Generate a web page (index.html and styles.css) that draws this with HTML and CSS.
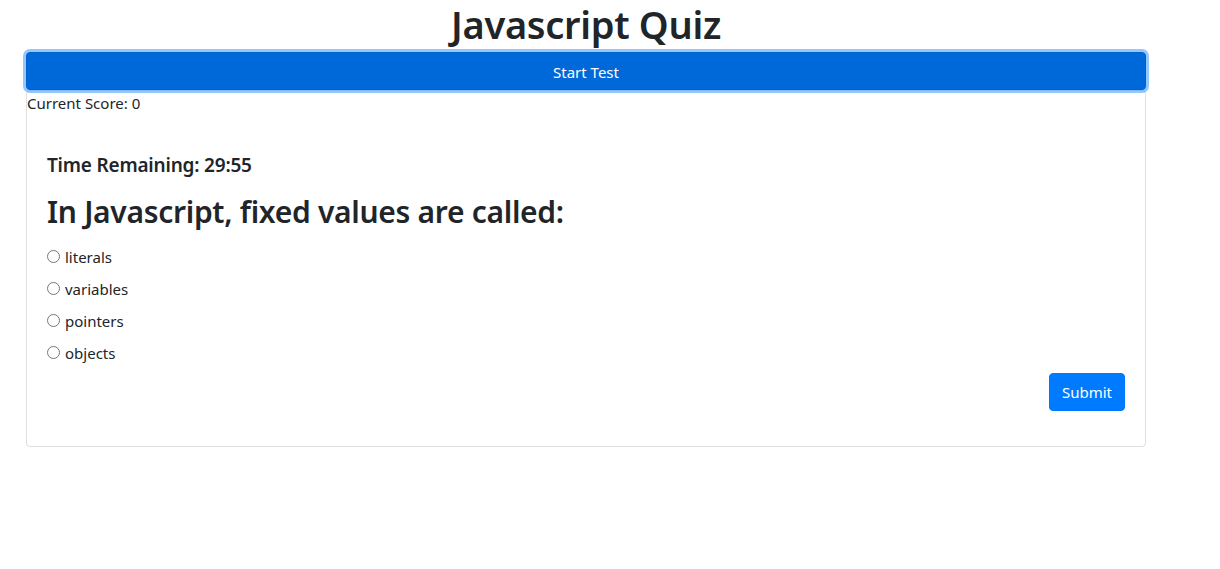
FILE: index.html
```html
<!DOCTYPE html>
<html lang="en">
<head>
<meta charset="utf-8">
<title>Javascript Quiz</title>
<link rel="stylesheet" href="styles.css">
</head>
<body>
<div class="page">
  <h1 class="title">Javascript Quiz</h1>
  <button class="btn-start" type="button">Start Test</button>
  <div class="card">
    <div class="score">Current Score: 0</div>
    <div class="card-body">
      <h5 class="timer">Time Remaining: 29:55</h5>
      <h2 class="question">In Javascript, fixed values are called:</h2>
      <form class="answers">
        <label class="option"><input type="radio" name="a" class="radio"> literals</label>
        <label class="option"><input type="radio" name="a" class="radio"> variables</label>
        <label class="option"><input type="radio" name="a" class="radio"> pointers</label>
        <label class="option"><input type="radio" name="a" class="radio"> objects</label>
        <div class="actions"><button class="btn-submit" type="button">Submit</button></div>
      </form>
    </div>
  </div>
</div>
</body>
</html>
```
FILE: styles.css
```css
* { box-sizing: border-box; }
html, body { margin: 0; padding: 0; background: #fff; }
body {
  font-family: "Noto Sans", "Open Sans", sans-serif;
  font-size: 15px;
  line-height: 1.5;
  color: #212529;
}
.page {
  width: 1120px;
  margin-left: 26px;
  display: flex;
  flex-direction: column;
}
.title {
  margin: 0 0 4px;
  font-size: 38px;
  font-weight: 600;
  line-height: 48px;
  text-align: center;
  letter-spacing: -0.3px;
}
.btn-start {
  height: 38px;
  width: 100%;
  padding-top: 2px;
  border: 1px solid #0062cc;
  border-radius: 4px;
  background: #0069d9;
  color: #fff;
  font-family: inherit;
  font-size: 15px;
  box-shadow: 0 0 0 3px rgba(38, 143, 255, 0.5);
  position: relative;
  z-index: 1;
}
.card {
  border: 1px solid rgba(0, 0, 0, 0.125);
  border-radius: 4px;
  display: flex;
  flex-direction: column;
}
.score {
  line-height: 24px;
}
.card-body {
  padding: 38px 20px 35px;
}
.timer {
  margin: 0 0 16px;
  font-size: 19px;
  font-weight: 600;
  line-height: 24px;
  letter-spacing: -0.2px;
}
.question {
  margin: 0 0 14px;
  font-size: 30px;
  font-weight: 600;
  line-height: 38px;
  letter-spacing: -0.3px;
}
.answers {
  display: flex;
  flex-direction: column;
  gap: 8px;
}
.option {
  display: flex;
  align-items: center;
  gap: 5px;
  line-height: 24px;
  font-size: 15px;
}
.radio {
  appearance: none;
  -webkit-appearance: none;
  width: 13px;
  height: 13px;
  margin: 0 0 2px 0;
  border: 1px solid #767676;
  border-radius: 50%;
  background: #fff;
}
.actions {
  display: flex;
  justify-content: flex-end;
}
.btn-submit {
  height: 38px;
  padding: 0 12px;
  border: 1px solid #007bff;
  border-radius: 4px;
  background: #007bff;
  color: #fff;
  font-family: inherit;
  font-size: 15px;
}
```
